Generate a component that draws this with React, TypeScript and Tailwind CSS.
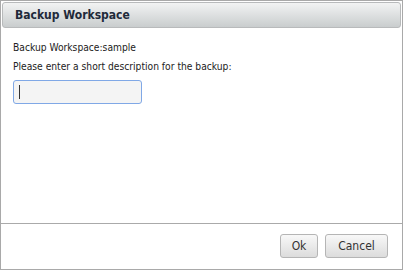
export default function App() {
  return (
    <div
      className="w-[403px] h-[270px] border border-[#a9a9a9] bg-white flex flex-col text-[#333]"
      style={{ fontFamily: '"DejaVu Sans Condensed", "DejaVu Sans", Verdana, sans-serif' }}
    >
      <div className="mx-[1px] mt-[1px] h-[26px] flex items-center px-[12px] rounded-[3px] border border-[#b8babb] bg-gradient-to-b from-[#f2f3f3] to-[#c9cdce]">
        <span className="text-[12px] font-bold text-[#1f2a3a]">Backup Workspace</span>
      </div>

      <div className="flex-1 px-[12px] pt-[12px] text-[10.2px] text-[#222]">
        <div className="h-[15px]">Backup Workspace:sample</div>
        <div className="mt-[4px] h-[15px]">Please enter a short description for the backup:</div>
        <div className="mt-[6px] w-[129px] h-[24px] rounded-[3px] border border-[#80a8e6] bg-[#f4f4f4] flex items-center px-[5px]">
          <span className="w-[1px] h-[14px] bg-[#333]" />
        </div>
      </div>

      <div className="h-[46px] border-t border-[#aaa] flex items-center justify-end gap-[7px] pr-[14px] pb-[1px]">
        <button className="w-[38px] h-[24px] rounded-[3px] border border-[#b5b5b5] bg-gradient-to-b from-[#f8f8f8] to-[#dcdcdc] text-[12px] text-[#333]">
          Ok
        </button>
        <button className="w-[63px] h-[24px] rounded-[3px] border border-[#b5b5b5] bg-gradient-to-b from-[#f8f8f8] to-[#dcdcdc] text-[12px] text-[#333]">
          Cancel
        </button>
      </div>
    </div>
  );
}
